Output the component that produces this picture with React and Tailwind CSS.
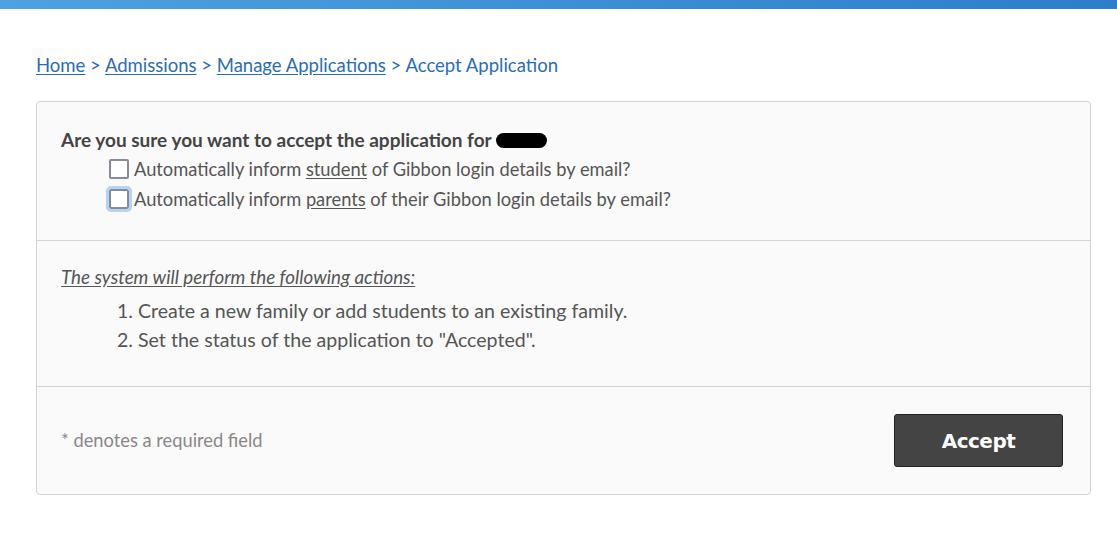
export default function App() {
  return (
    <div className="min-h-screen bg-white">
      <div className="h-[9px] bg-gradient-to-r from-[#50a1e1] to-[#2d7dcb]" />
      <div className="px-[36px] pt-[44px] font-['Lato','Noto_Sans',sans-serif]">
        <div className="text-[18.5px] text-[#2a6db5] leading-[24px]">
          <a className="underline underline-offset-2" href="#">Home</a>
          {" > "}
          <a className="underline underline-offset-2" href="#">Admissions</a>
          {" > "}
          <a className="underline underline-offset-2" href="#">Manage Applications</a>
          {" > Accept Application"}
        </div>

        <div className="mt-[24px] w-[1055px] border border-[#d4d4d4] rounded-[4px] bg-[#fafafa] text-[#555]">
          {/* question */}
          <div className="px-[24px] pt-[26px] pb-[30px] border-b border-[#d4d4d4] text-[18.3px]">
            <div className="font-bold text-[19px] text-[#444] leading-[24px] flex items-center gap-[4px]">
              Are you sure you want to accept the application for
              <span className="inline-block w-[51px] h-[15px] bg-black rounded-full" />
            </div>
            <div className="pl-[48px] mt-[6px] space-y-[8px]">
              <label className="flex items-center gap-[5px] leading-[22px]">
                <span className="shrink-0 w-[20px] h-[20px] border-2 border-[#8a8a96] rounded-[2px] bg-white" />
                <span>Automatically inform <span className="underline underline-offset-2">student</span> of Gibbon login details by email?</span>
              </label>
              <label className="flex items-center gap-[5px] leading-[22px]">
                <span className="shrink-0 w-[20px] h-[20px] border-2 border-[#8a8a96] rounded-[2px] bg-white outline-[3px] outline-[#b5d3f2]" />
                <span>Automatically inform <span className="underline underline-offset-2">parents</span> of their Gibbon login details by email?</span>
              </label>
            </div>
          </div>

          {/* actions */}
          <div className="px-[24px] pt-[24px] pb-[32px] border-b border-[#d4d4d4]">
            <div className="italic underline underline-offset-2 text-[18.8px] leading-[24px]">The system will perform the following actions:</div>
            <ol className="list-decimal list-inside pl-[56px] mt-[7px] text-[19.6px] leading-[29px] text-[#555]">
              <li>Create a new family or add students to an existing family.</li>
              <li>Set the status of the application to "Accepted".</li>
            </ol>
          </div>

          {/* footer */}
          <div className="pl-[24px] pr-[27px] pt-[27px] pb-[27px] flex items-center justify-between">
            <span className="text-[18.3px] text-[#888]">* denotes a required field</span>
            <button className="w-[169px] h-[53px] bg-[#444] border border-[#222] rounded-[3px] text-white text-[20px] font-bold font-['DejaVu_Sans',sans-serif] tracking-[-0.5px]">
              Accept
            </button>
          </div>
        </div>
      </div>
    </div>
  );
}
